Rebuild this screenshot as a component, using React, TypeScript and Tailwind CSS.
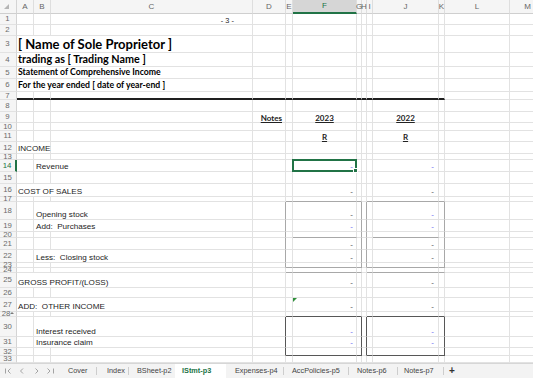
import type { ReactNode } from "react";

type Tone = "grid" | "box" | "dark" | "thick";
type CellDef = { span?: number; node?: ReactNode; cls?: string };
type RowDef = { n: number; h: string; cells?: Record<number, CellDef> };

const COLUMNS = ["A", "B", "C", "D", "E", "F", "G", "H", "I", "J", "K", "L", "M"];
const GRID =
  "grid grid-rows-1 grid-cols-[17px_17px_17px_202px_33px_7px_64px_5px_5px_6px_66px_6px_65px_36px]";

const ARIAL = "font-['Liberation_Sans',Arial,sans-serif] text-[8.1px] leading-none whitespace-pre text-[#1c1c1c]";
const CAL = "font-['Lato',sans-serif] font-bold leading-none whitespace-nowrap text-black";

// cell borders: each cell owns its right and bottom edge
const RIGHT: Record<Tone, string> = {
  grid: "[border-right:1px_solid_#e2e2e2]",
  box: "[border-right:1px_solid_#a8a8a8]",
  dark: "[border-right:1px_solid_#575757]",
  thick: "[border-right:1px_solid_#e2e2e2]",
};

const BOTTOM: Record<Tone, string> = {
  grid: "[border-bottom:1px_solid_#e2e2e2]",
  box: "[border-bottom:1px_solid_#a8a8a8]",
  dark: "[border-bottom:1px_solid_#575757]",
  thick: "[border-bottom:2px_solid_#1f1f1f]",
};

const SPAN: Record<number, string> = { 1: "", 2: "col-span-2", 3: "col-span-3" };

const BOXES = [
  { r1: 18, r2: 23, c1: 4, c2: 6, tone: "box" as Tone },
  { r1: 18, r2: 23, c1: 8, c2: 10, tone: "box" as Tone },
  { r1: 30, r2: 32, c1: 4, c2: 6, tone: "dark" as Tone },
  { r1: 30, r2: 32, c1: 8, c2: 10, tone: "dark" as Tone },
];

const LINES = [
  { row: 7, cols: [0, 1, 2, 3, 4, 5, 6, 7, 8, 9, 10], tone: "thick" as Tone },
  { row: 20, cols: [5, 9], tone: "box" as Tone },
  { row: 24, cols: [4, 5, 6, 8, 9, 10], tone: "box" as Tone },
];

function text(value: string, pad = "pl-[1px]"): CellDef {
  return { node: <span className={ARIAL}>{value}</span>, cls: pad };
}

function dash(blue: boolean, pad: string, extra?: ReactNode): CellDef {
  return {
    node: (
      <>
        <span className={`${ARIAL} ${blue ? "text-[#6d6df2]" : "text-[#555555]"}`}>-</span>
        {extra}
      </>
    ),
    cls: `justify-end ${pad}`,
  };
}

const f = (blue: boolean, extra?: ReactNode) => dash(blue, "pr-[3px]", extra);
const j = (blue: boolean) => dash(blue, "pr-[4px]");

const heading = (value: string, size: string): CellDef => ({
  span: 3,
  node: <span className={`${CAL} ${size}`}>{value}</span>,
  cls: "pl-[1px] pb-[1px]",
});

const colTitle = (value: string): CellDef => ({
  node: (
    <span className="font-['Lato',sans-serif] font-bold text-[8px] leading-none text-[#222] underline underline-offset-[1px]">
      {value}
    </span>
  ),
  cls: "justify-center",
});

const selection = (
  <div className="absolute -left-px -top-px -right-px -bottom-px z-10 border-2 border-[#217346]">
    <div className="absolute -right-[3px] -bottom-[3px] h-[5px] w-[5px] border border-white bg-[#217346]" />
  </div>
);

const errorMark = (
  <div className="absolute left-0 top-0 h-0 w-0 border-t-[4px] border-r-[4px] border-t-[#2f8f3a] border-r-transparent" />
);

const ROWS: RowDef[] = [
  {
    n: 1,
    h: "h-[11px]",
    cells: {
      2: {
        node: <span className="font-['Liberation_Sans',Arial,sans-serif] text-[7.4px] leading-none text-[#222]">- 3 -</span>,
        cls: "justify-end pr-[18px]",
      },
    },
  },
  { n: 2, h: "h-[11px]" },
  { n: 3, h: "h-[17px]", cells: { 0: heading("[ Name of Sole Proprietor ]", "text-[13px]") } },
  { n: 4, h: "h-[14px]", cells: { 0: heading("trading as [ Trading Name ]", "text-[10.8px]") } },
  { n: 5, h: "h-[12px]", cells: { 0: heading("Statement of Comprehensive Income", "text-[8.7px]") } },
  { n: 6, h: "h-[13px]", cells: { 0: heading("For the year ended [ date of year-end ]", "text-[8.7px]") } },
  { n: 7, h: "h-[8px]" },
  { n: 8, h: "h-[12px]" },
  {
    n: 9,
    h: "h-[11px]",
    cells: {
      3: { ...colTitle("Notes"), cls: "justify-end pr-[3px]" },
      5: colTitle("2023"),
      9: colTitle("2022"),
    },
  },
  { n: 10, h: "h-[8px]" },
  { n: 11, h: "h-[11px]", cells: { 5: colTitle("R"), 9: colTitle("R") } },
  { n: 12, h: "h-[12px]", cells: { 0: { ...text("INCOME"), span: 2 } } },
  { n: 13, h: "h-[6px]" },
  {
    n: 14,
    h: "h-[12px]",
    cells: { 1: { ...text("Revenue", "pl-[2px]"), span: 2 }, 5: f(true, selection), 9: j(true) },
  },
  { n: 15, h: "h-[12px]" },
  { n: 16, h: "h-[13px]", cells: { 0: { ...text("COST OF SALES"), span: 3 }, 5: f(false), 9: j(false) } },
  { n: 17, h: "h-[5px]" },
  {
    n: 18,
    h: "h-[18px]",
    cells: { 1: { ...text("Opening stock", "pl-[2px]"), span: 2 }, 5: f(false), 9: j(true) },
  },
  {
    n: 19,
    h: "h-[12px]",
    cells: { 1: { ...text("Add:  Purchases", "pl-[2px]"), span: 2 }, 5: f(true), 9: j(true) },
  },
  { n: 20, h: "h-[6px]" },
  { n: 21, h: "h-[12px]", cells: { 5: f(false), 9: j(false) } },
  {
    n: 22,
    h: "h-[13px]",
    cells: { 1: { ...text("Less:  Closing stock", "pl-[2px]"), span: 2 }, 5: f(false), 9: j(false) },
  },
  { n: 23, h: "h-[5px]" },
  { n: 24, h: "h-[5px]" },
  {
    n: 25,
    h: "h-[15px]",
    cells: { 0: { ...text("GROSS PROFIT/(LOSS)"), span: 3 }, 5: f(false), 9: j(false) },
  },
  { n: 26, h: "h-[10px]" },
  {
    n: 27,
    h: "h-[14px]",
    cells: { 0: { ...text("ADD:  OTHER INCOME"), span: 3 }, 5: f(false, errorMark), 9: j(false) },
  },
  { n: 28, h: "h-[5px]" },
  {
    n: 30,
    h: "h-[20px]",
    cells: { 1: { ...text("Interest received", "pl-[2px]"), span: 2 }, 5: f(true), 9: j(true) },
  },
  {
    n: 31,
    h: "h-[11px]",
    cells: { 1: { ...text("Insurance claim", "pl-[2px]"), span: 2 }, 5: f(true), 9: j(true) },
  },
  { n: 32, h: "h-[8px]" },
  { n: 33, h: "h-[7px]" },
];

const ORDER = ROWS.map((r) => r.n);

function nextRow(n: number) {
  const i = ORDER.indexOf(n);
  return ORDER[i + 1] ?? -1;
}

function rightTone(n: number, c: number): Tone {
  for (const b of BOXES) {
    if (n >= b.r1 && n <= b.r2 && (c === b.c1 - 1 || c === b.c2)) return b.tone;
  }
  return "grid";
}

function bottomTone(n: number, c: number): Tone {
  for (const l of LINES) {
    if (l.row === n && l.cols.includes(c)) return l.tone;
  }
  for (const b of BOXES) {
    if (c >= b.c1 && c <= b.c2 && (n === b.r2 || nextRow(n) === b.r1)) return b.tone;
  }
  return "grid";
}

function RowHeader({ n }: { n: number }) {
  const active = n === 14;
  return (
    <div
      className={`relative flex min-h-0 items-center justify-center overflow-visible bg-[#f5f5f5] pr-[1px] font-['Liberation_Sans',Arial,sans-serif] text-[7.8px] leading-none [border-bottom:1px_solid_#e2e2e2] ${
        active ? "text-[#217346] [border-right:2px_solid_#217346]" : "text-[#6b6b6b] [border-right:1px_solid_#d4d4d4]"
      }`}
    >
      <span className={n === 28 ? "-ml-[3px]" : ""}>{n}</span>
      {n === 28 ? (
        <svg className="absolute right-[2px] top-[-1px]" width="4" height="9" viewBox="0 0 4 9">
          <path d="M0 3 L2 1 L4 3 Z" fill="#7a7a7a" />
          <path d="M0 6 L2 8 L4 6 Z" fill="#7a7a7a" />
        </svg>
      ) : null}
    </div>
  );
}

function SheetRow({ row }: { row: RowDef }) {
  const items: ReactNode[] = [];
  for (let c = 0; c < COLUMNS.length; ) {
    const def = row.cells?.[c];
    const span = def?.span ?? 1;
    const last = c + span - 1;
    items.push(
      <div
        key={c}
        className={`relative flex min-h-0 min-w-0 items-end bg-white ${SPAN[span]} ${RIGHT[rightTone(row.n, last)]} ${BOTTOM[bottomTone(row.n, c)]} ${def?.cls ?? ""}`}
      >
        {def?.node}
      </div>,
    );
    c += span;
  }

  return (
    <div className={`${GRID} ${row.h}`}>
      <RowHeader n={row.n} />
      {items}
    </div>
  );
}

function ColumnHeader() {
  return (
    <div className={`${GRID} h-[14px]`}>
      <div className="relative bg-[#f5f5f5] [border-right:1px_solid_#d4d4d4] [border-bottom:1px_solid_#cfcfcf]">
        <svg className="absolute left-[4px] top-[4px]" width="5" height="5" viewBox="0 0 5 5">
          <path d="M5 0 L5 5 L0 5 Z" fill="#b5b5b5" />
        </svg>
      </div>
      {COLUMNS.map((name) => {
        const active = name === "F";
        return (
          <div
            key={name}
            className={`flex items-center justify-center overflow-visible whitespace-nowrap font-['Liberation_Sans',Arial,sans-serif] text-[8px] leading-none [border-right:1px_solid_#dedede] ${
              active
                ? "bg-[#d6d6d6] text-[#217346] [border-bottom:2px_solid_#217346]"
                : "bg-[#f5f5f5] text-[#666666] [border-bottom:1px_solid_#cfcfcf]"
            }`}
          >
            {name}
          </div>
        );
      })}
    </div>
  );
}

const TABS = [
  { name: "Cover", w: "w-[36px]", pl: "pl-[8px]", sep: true },
  { name: "Index", w: "w-[31px]", pl: "pl-[10px]", sep: true },
  { name: "BSheet-p2", w: "w-[46px]", pl: "pl-[8px]", sep: false },
  { name: "IStmt-p3", w: "w-[51px]", pl: "pl-[7px]", sep: false, active: true },
  { name: "Expenses-p4", w: "w-[57px]", pl: "pl-[9px]", sep: true },
  { name: "AccPolicies-p5", w: "w-[64px]", pl: "pl-[8px]", sep: true },
  { name: "Notes-p6", w: "w-[48px]", pl: "pl-[8px]", sep: true },
  { name: "Notes-p7", w: "w-[45px]", pl: "pl-[6px]", sep: true },
];

function SheetTabs() {
  return (
    <div className="flex h-[15px] items-stretch bg-[#f3f3f3] font-['Liberation_Sans',Arial,sans-serif] text-[7.3px] leading-none text-[#444] [border-top:1px_solid_#d6d6d6]">
      <div className="flex w-[60px] items-center">
        <svg width="60" height="14" viewBox="0 0 60 14" fill="none" stroke="#a3a3a3" strokeWidth="1">
          <path d="M5.5 4.5 V9.5" />
          <path d="M10.5 4.5 L8 7 L10.5 9.5" />
          <path d="M23 4.5 L20.5 7 L23 9.5" />
          <path d="M35.5 4.5 L38 7 L35.5 9.5" />
          <path d="M47.5 4.5 L50 7 L47.5 9.5" />
          <path d="M53.5 4.5 V9.5" />
        </svg>
      </div>
      {TABS.map((t) => (
        <div key={t.name} className="flex items-stretch">
          <div
            className={`flex items-center ${t.w} ${t.pl} ${
              t.active ? "bg-white font-bold text-[#217346]" : ""
            }`}
          >
            {t.name}
          </div>
          {t.sep ? <div className="my-[3px] w-px bg-[#cdcdcd]" /> : null}
        </div>
      ))}
      <div className="flex items-center pl-[5px] text-[10px] font-bold text-[#333]">+</div>
    </div>
  );
}

export default function App() {
  return (
    <div className="h-[378px] w-[533px] overflow-hidden bg-white">
      <ColumnHeader />
      {ROWS.map((row) => (
        <SheetRow key={row.n} row={row} />
      ))}
      <SheetTabs />
    </div>
  );
}
